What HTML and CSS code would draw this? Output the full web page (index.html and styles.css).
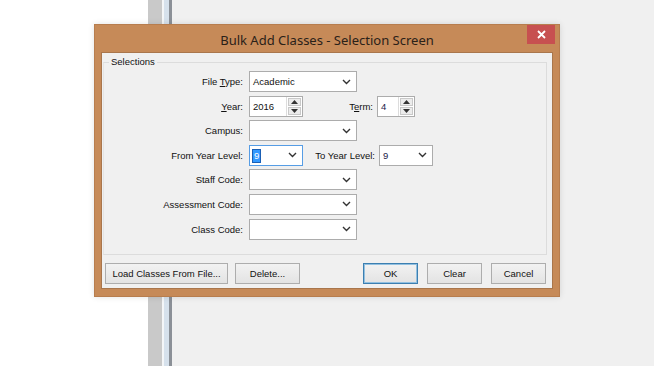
FILE: index.html
```html
<!DOCTYPE html>
<html>
<head>
<meta charset="utf-8">
<title>Bulk Add Classes - Selection Screen</title>
<link rel="stylesheet" href="styles.css">
</head>
<body>
<div class="desktop">
  <div class="pane-left"></div>
  <div class="splitter"><div class="s1"></div><div class="s2"></div><div class="s3"></div><div class="s4"></div></div>
  <div class="pane-main"></div>
</div>

<div class="dialog">
  <div class="titlebar">
    <span class="title">Bulk Add Classes - Selection Screen</span>
    <div class="close"><svg width="9" height="9" viewBox="0 0 9 9"><path d="M1 1L8 8M8 1L1 8" stroke="#fff" stroke-width="1.8"/></svg></div>
  </div>
  <div class="client">
    <fieldset class="group">
      <legend>Selections</legend>
      <div class="form">
        <label class="lbl">File <u>T</u>ype:</label>
        <div class="ctl"><div class="combo wide"><span class="val">Academic</span><svg class="chev" width="9" height="6" viewBox="0 0 9 6"><path d="M1 1L4.5 4.5L8 1" fill="none" stroke="#333" stroke-width="1.4"/></svg></div></div>

        <label class="lbl"><u>Y</u>ear:</label>
        <div class="ctl">
          <div class="spin year"><span class="val">2016</span><div class="spinbtns"><div class="sb"><svg width="7" height="4" viewBox="0 0 7 4"><path d="M0 4L3.5 0L7 4Z" fill="#333"/></svg></div><div class="sb"><svg width="7" height="4" viewBox="0 0 7 4"><path d="M0 0L3.5 4L7 0Z" fill="#333"/></svg></div></div></div>
          <label class="lbl inl term">T<u>e</u>rm:</label>
          <div class="spin termbox"><span class="val blue">4</span><div class="spinbtns"><div class="sb"><svg width="7" height="4" viewBox="0 0 7 4"><path d="M0 4L3.5 0L7 4Z" fill="#333"/></svg></div><div class="sb"><svg width="7" height="4" viewBox="0 0 7 4"><path d="M0 0L3.5 4L7 0Z" fill="#333"/></svg></div></div></div>
        </div>

        <label class="lbl">Campus:</label>
        <div class="ctl"><div class="combo wide"><span class="val"></span><svg class="chev" width="9" height="6" viewBox="0 0 9 6"><path d="M1 1L4.5 4.5L8 1" fill="none" stroke="#333" stroke-width="1.4"/></svg></div></div>

        <label class="lbl">From Year Level:</label>
        <div class="ctl">
          <div class="combo narrow focus"><span class="val"><span class="sel">9</span></span><svg class="chev" width="9" height="6" viewBox="0 0 9 6"><path d="M1 1L4.5 4.5L8 1" fill="none" stroke="#333" stroke-width="1.4"/></svg></div>
          <label class="lbl inl toyear">To Year Level:</label>
          <div class="combo narrow"><span class="val blue">9</span><svg class="chev" width="9" height="6" viewBox="0 0 9 6"><path d="M1 1L4.5 4.5L8 1" fill="none" stroke="#333" stroke-width="1.4"/></svg></div>
        </div>

        <label class="lbl">Staff Code:</label>
        <div class="ctl"><div class="combo wide"><span class="val"></span><svg class="chev" width="9" height="6" viewBox="0 0 9 6"><path d="M1 1L4.5 4.5L8 1" fill="none" stroke="#333" stroke-width="1.4"/></svg></div></div>

        <label class="lbl">Assessment Code:</label>
        <div class="ctl"><div class="combo wide"><span class="val"></span><svg class="chev" width="9" height="6" viewBox="0 0 9 6"><path d="M1 1L4.5 4.5L8 1" fill="none" stroke="#333" stroke-width="1.4"/></svg></div></div>

        <label class="lbl">Class Code:</label>
        <div class="ctl"><div class="combo wide"><span class="val"></span><svg class="chev" width="9" height="6" viewBox="0 0 9 6"><path d="M1 1L4.5 4.5L8 1" fill="none" stroke="#333" stroke-width="1.4"/></svg></div></div>
      </div>
    </fieldset>
    <div class="buttons">
      <div class="btn load">Load Classes From File...</div>
      <div class="btn del">Delete...</div>
      <div class="spacer"></div>
      <div class="btn std default">OK</div>
      <div class="btn std">Clear</div>
      <div class="btn std">Cancel</div>
    </div>
  </div>
</div>
</body>
</html>
```

FILE: styles.css
```css
* { box-sizing: border-box; }
html, body { margin: 0; padding: 0; }
body {
  width: 654px;
  height: 366px;
  overflow: hidden;
  position: relative;
  font-family: "Liberation Sans", Arial, sans-serif;
  background: #f0f0f0;
}
.desktop { display: flex; height: 366px; }
.pane-left { width: 148px; background: #ffffff; }
.splitter { display: flex; }
.s1 { width: 14px; background: #c9c9c9; }
.s2 { width: 2px; background: #f4f6f8; }
.s3 { width: 5px; background: #d6e1ec; }
.s4 { width: 3px; background: #8b9097; }
.pane-main { flex: 1; background: #f0f0f0; }

.dialog {
  position: absolute;
  left: 94px;
  top: 24px;
  width: 466px;
  height: 273px;
  background: #c68a58;
  border: 1px solid #b77d4e;
  display: flex;
  flex-direction: column;
  padding: 0 6px 7px 6px;
  box-shadow: 0 0 6px rgba(0,0,0,0.12);
}
.titlebar {
  height: 27px;
  display: flex;
  align-items: center;
  justify-content: center;
  position: relative;
}
.title {
  font-family: "Noto Sans", "Open Sans", sans-serif;
  font-size: 13px;
  color: #2a2118;
  margin-top: 3px;
}
.close {
  position: absolute;
  right: -2px;
  top: 0;
  width: 28px;
  height: 19px;
  background: #c75050;
  display: flex;
  align-items: center;
  justify-content: center;
}
.client {
  flex: 1;
  background: #f0f0f0;
  border: 1px solid #a9764c;
  display: flex;
  flex-direction: column;
  padding: 0 5px 4px 1px;
  font-size: 9.5px;
  color: #111;
}
.group {
  margin: 3px 0 0 0;
  padding: 0 0 14px 0;
  border: 1px solid #dcdcdc;
  border-left-color: #e4e4e4;
  min-width: 0;
}
.group legend {
  margin-left: 5px;
  padding: 0 2px;
  font-size: 9.5px;
  line-height: 12px;
  color: #111;
}
.form {
  display: grid;
  grid-template-columns: 139px auto;
  column-gap: 6px;
  row-gap: 3.6px;
  padding-top: 3px;
}
.lbl {
  text-align: right;
  height: 21px;
  line-height: 21px;
  white-space: nowrap;
}
.ctl { display: flex; align-items: center; height: 21px; }
.inl { display: block; }
.term { width: 70px; margin-right: 4px; }
.toyear { width: 72px; margin-right: 4px; }

.combo, .spin {
  height: 21px;
  background: #fff;
  border: 1px solid #acacac;
  display: flex;
  align-items: center;
  position: relative;
}
.combo.wide { width: 108px; }
.combo.narrow { width: 54px; }
.combo.focus { border-color: #569de5; }
.val { flex: 1; padding-left: 3px; line-height: 19px; white-space: nowrap; }
.val.blue { color: #1b1b4a; }
.sel {
  display: inline-block;
  background: #3399ff;
  color: #ffffff;
  line-height: 12px;
  padding: 0 1px;
  vertical-align: middle;
  box-shadow: 0 0 0 1px #1a5fb4;
}
.chev { margin-right: 5px; }
.spin.year { width: 54px; }
.spin.termbox { width: 38px; }
.spinbtns {
  width: 16px;
  height: 19px;
  display: flex;
  flex-direction: column;
  border-left: 1px solid #dcdcdc;
  padding: 1px;
  gap: 1px;
}
.sb {
  flex: 1;
  background: #ececec;
  border: 1px solid #c9c9c9;
  display: flex;
  align-items: center;
  justify-content: center;
}

.buttons {
  display: flex;
  align-items: center;
  margin-top: auto;
  padding-left: 2px;
  padding-right: 1px;
  gap: 7px;
}
.spacer { flex: 1; }
.btn {
  height: 21px;
  border: 1px solid #adadad;
  background: linear-gradient(#f2f2f2, #e3e3e3);
  display: flex;
  align-items: center;
  justify-content: center;
  font-size: 9.5px;
  color: #111;
  white-space: nowrap;
}
.btn.load { width: 123px; }
.btn.del { width: 65px; }
.btn.std { width: 55px; margin-left: 2px; }
.btn.default { border-color: #3c7fb1; box-shadow: inset 0 0 0 1px #92c0e0; }
```
